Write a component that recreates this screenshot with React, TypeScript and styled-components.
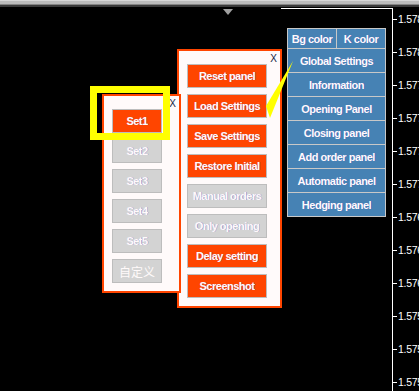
import React from "react";
import styled, { createGlobalStyle } from "styled-components";

const GlobalStyle = createGlobalStyle`
  html, body {
    margin: 0;
    padding: 0;
    background: #000;
  }
`;

type Kind = "active" | "disabled";

const setButtons: { label: string; kind: Kind }[] = [
  { label: "Set1", kind: "active" },
  { label: "Set2", kind: "disabled" },
  { label: "Set3", kind: "disabled" },
  { label: "Set4", kind: "disabled" },
  { label: "Set5", kind: "disabled" },
  { label: "自定义", kind: "disabled" },
];

const menuButtons: { label: string; kind: Kind }[] = [
  { label: "Reset panel", kind: "active" },
  { label: "Load Settings", kind: "active" },
  { label: "Save Settings", kind: "active" },
  { label: "Restore Initial", kind: "active" },
  { label: "Manual orders", kind: "disabled" },
  { label: "Only opening", kind: "disabled" },
  { label: "Delay setting", kind: "active" },
  { label: "Screenshot", kind: "active" },
];

const toolRows = [
  "Global Settings",
  "Information",
  "Opening Panel",
  "Closing panel",
  "Add order panel",
  "Automatic panel",
  "Hedging panel",
];

const prices = [
  "1.578", "1.578", "1.577", "1.577", "1.577", "1.577",
  "1.576", "1.576", "1.576", "1.575", "1.575", "1.575",
];

export default function App() {
  return (
    <>
      <GlobalStyle />
      <Screen>
        <TitleStrip />
        <Body>
          <Chart>
            <ShiftMarker />
            <PriceLine />

            <Window $left={177} $top={42} $width={105}>
              <Close>X</Close>
              <ButtonStack>
                {menuButtons.map((b) => (
                  <PanelButton key={b.label} $kind={b.kind} $width={80}>
                    {b.label}
                  </PanelButton>
                ))}
              </ButtonStack>
            </Window>

            <Window $left={102} $top={87} $width={79}>
              <Close>X</Close>
              <ButtonStack>
                {setButtons.map((b) => (
                  <PanelButton
                    key={b.label}
                    $kind={b.kind}
                    $width={50}
                    $cjk={b.label === "自定义"}
                  >
                    {b.label}
                  </PanelButton>
                ))}
              </ButtonStack>
            </Window>

            <ToolMenu>
              <ToolButton>Bg color</ToolButton>
              <ToolButton>K color</ToolButton>
              {toolRows.map((r) => (
                <ToolButton key={r} $wide>
                  {r}
                </ToolButton>
              ))}
            </ToolMenu>

            <Highlight />
            <Pointer viewBox="0 0 40 70" width="40" height="70">
              <polygon points="28,4 1,49 5,61" fill="#ffff00" />
            </Pointer>
          </Chart>

          <Axis>
            {prices.map((p, i) => (
              <AxisLabel key={i}>
                <Tick />
                <AxisText>{p}</AxisText>
              </AxisLabel>
            ))}
          </Axis>
        </Body>
      </Screen>
    </>
  );
}

const Screen = styled.div`
  width: 419px;
  height: 391px;
  display: flex;
  flex-direction: column;
  overflow: hidden;
  background: #000;
  font-family: "Liberation Sans", Arial, sans-serif;
`;

const TitleStrip = styled.div`
  height: 7px;
  flex: none;
  background: linear-gradient(
    to bottom,
    #d8d8d8 0 1px,
    #bcbcbc 1px 4px,
    #858585 4px 5px,
    #3a3a3a 5px 7px
  );
`;

const Body = styled.div`
  flex: 1;
  display: flex;
  min-height: 0;
`;

const Chart = styled.div`
  position: relative;
  width: 392px;
  flex: none;
  border-right: 1px solid #fff;
  margin-top: 1px;
`;

const ShiftMarker = styled.div`
  position: absolute;
  left: 223px;
  top: 1px;
  width: 0;
  height: 0;
  border-left: 5px solid transparent;
  border-right: 5px solid transparent;
  border-top: 6px solid #a0a0a0;
`;

const PriceLine = styled.div`
  position: absolute;
  left: 281px;
  right: 0;
  top: 0;
  height: 1px;
  background: #fff;
`;

const Window = styled.div<{ $left: number; $top: number; $width: number }>`
  position: absolute;
  left: ${(p) => p.$left}px;
  top: ${(p) => p.$top - 1}px;
  width: ${(p) => p.$width}px;
  box-sizing: border-box;
  border: 2px solid #ff4500;
  background: #fffafa;
  padding: 13px 0 8px 8px;
`;

const Close = styled.span`
  position: absolute;
  top: 2px;
  right: 3px;
  font-size: 10px;
  line-height: 11px;
  color: #15243f;
`;

const ButtonStack = styled.div`
  display: flex;
  flex-direction: column;
  gap: 6px;
`;

const PanelButton = styled.div<{ $kind: Kind; $width: number; $cjk?: boolean }>`
  width: ${(p) => p.$width}px;
  height: 24px;
  box-sizing: border-box;
  display: flex;
  align-items: center;
  justify-content: center;
  border: 1px solid #bdbdbd;
  background: ${(p) => (p.$kind === "active" ? "#ff4500" : "#d3d3d3")};
  color: #fffafa;
  font-family: ${(p) =>
    p.$cjk
      ? `"Noto Sans CJK SC", "Liberation Sans", sans-serif`
      : `"Liberation Sans", Arial, sans-serif`};
  font-size: ${(p) => (p.$cjk ? "12px" : "11px")};
  font-weight: ${(p) => (p.$cjk ? 400 : 700)};
  letter-spacing: ${(p) => (p.$cjk ? "0" : "-0.5px")};
  text-shadow: ${(p) => (p.$cjk ? "none" : "0.6px 0.4px 0 rgba(70, 70, 200, 0.5)")};
  white-space: nowrap;
`;

const ToolMenu = styled.div`
  position: absolute;
  left: 287px;
  top: 20px;
  width: 99px;
  box-sizing: border-box;
  display: grid;
  grid-template-columns: 1fr 1fr;
  grid-auto-rows: 23px;
  grid-template-rows: 19px;
  gap: 1px;
  padding: 1px;
  background: #c8c8c8;
`;

const ToolButton = styled.div<{ $wide?: boolean }>`
  grid-column: ${(p) => (p.$wide ? "1 / span 2" : "auto")};
  background: #4682b4;
  color: #fffafa;
  display: flex;
  align-items: center;
  justify-content: center;
  font-size: 11px;
  font-weight: 700;
  letter-spacing: -0.5px;
  text-shadow: 0.6px 0.4px 0 rgba(60, 60, 200, 0.5);
  white-space: nowrap;
`;

const Highlight = styled.div`
  position: absolute;
  left: 90px;
  top: 78px;
  width: 80px;
  height: 54px;
  box-sizing: border-box;
  border: 7px solid #ffff00;
  pointer-events: none;
`;

const Pointer = styled.svg`
  position: absolute;
  left: 265px;
  top: 49px;
  overflow: visible;
`;

const Axis = styled.div`
  flex: 1;
  display: flex;
  flex-direction: column;
  padding-top: 5px;
  overflow: hidden;
`;

const AxisLabel = styled.div`
  height: 33px;
  flex: none;
  display: flex;
  align-items: flex-start;
`;

const Tick = styled.span`
  width: 4px;
  height: 1px;
  margin-top: 7px;
  background: #fff;
  flex: none;
`;

const AxisText = styled.span`
  margin-left: 1px;
  font-size: 10.5px;
  line-height: 14px;
  letter-spacing: -0.3px;
  color: #fff;
  white-space: nowrap;
`;
